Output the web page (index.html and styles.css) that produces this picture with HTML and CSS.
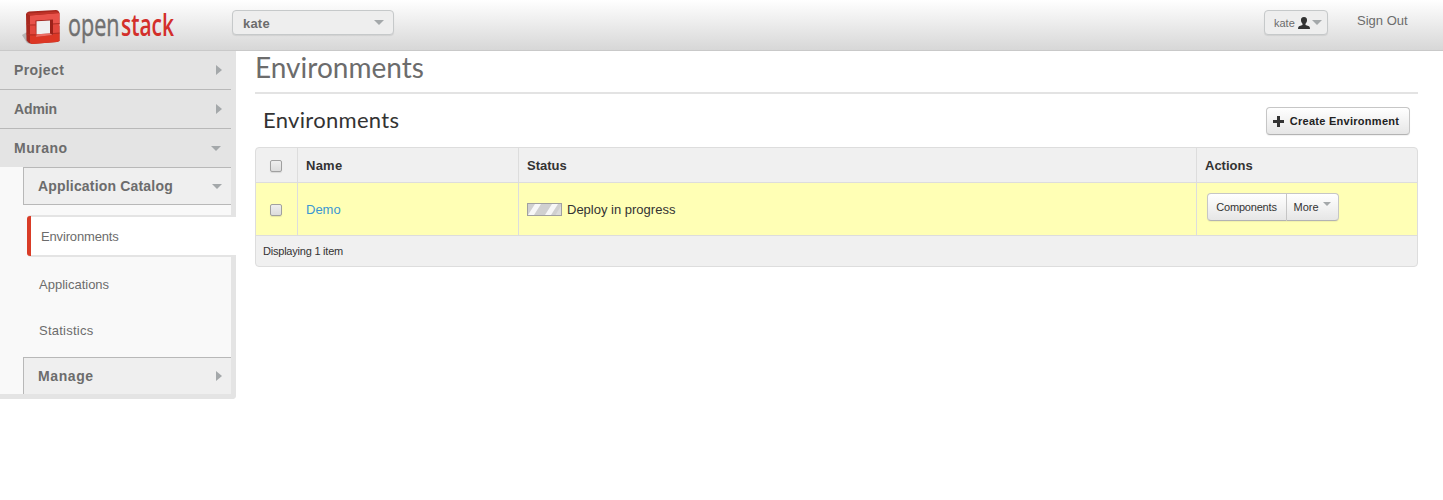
FILE: index.html
```html
<!DOCTYPE html>
<html lang="en">
<head>
<meta charset="utf-8">
<title>Environments - OpenStack Dashboard</title>
<link rel="stylesheet" href="styles.css">
</head>
<body>
<header class="topbar">
  <svg class="logo" width="160" height="50" viewBox="0 0 160 50">
    <path d="M-1 35l5-3 4 12-4-1z" fill="#888" opacity=".5"/>
    <path d="M3 14Q3.500 12 6 11.500L33 10Q35.500 10 36.500 13V24L35.500 25 36.500 26V41L34 42 9 44Q5 43 3.500 40.500z" fill="#a8281f"/>
    <path d="M7 15.500L36.500 13V23.500L7 25z" fill="#e8524a"/>
    <path d="M7 25L36.500 23.500V33L7 34.500z" fill="#e2473d"/>
    <path d="M7 34.500L36.500 33V41L34 42 9 44 7 42.500z" fill="#dc3725"/>
    <path d="M4 13.500L33 11.500 36 13 7 15.500z" fill="#c23329"/>
    <path d="M12.500 20.500L30 19.500V35L13 37z" fill="#9c2119"/>
    <path d="M13.500 21.300L27 20.500V33.500L13.500 34.300z" fill="#f0f0f0"/>
    <path d="M13.500 34.300L27 33.500l3 1.500-17 2z" fill="#ee6d63"/>
    <path d="M3.500 24l3.500 1h5.500M3.500 34l3.500 1h5.500M30 24l6.500-.5M30 33.500l6.500-.5" fill="none" stroke="#b02e25"/>
    <text class="logo-text" x="45" y="36" textLength="51.500" lengthAdjust="spacingAndGlyphs">open</text>
    <text class="logo-text logo-strong" x="98" y="36" textLength="53" lengthAdjust="spacingAndGlyphs">stack</text>
  </svg>
  <div class="project-switch"><span>kate</span><i class="tri down"></i></div>
  <div class="user-area">
    <div class="user-menu"><span>kate</span>
      <svg width="12" height="12" viewBox="0 0 12 12"><path d="M6 0C8.300 0 9.200 1.300 9 3.500 8.900 5 8.300 5.900 7.500 6.700V8L11 9.300Q12 9.800 12 12H0Q0 9.800 1 9.300L4.500 8V6.700C3.700 5.900 3.100 5 3 3.500 2.800 1.300 3.700 0 6 0z" fill="#333"/></svg>
      <i class="tri down"></i>
    </div>
    <a class="signout">Sign Out</a>
  </div>
</header>
<div class="page">
  <nav class="sidebar">
    <div class="dash"><span class="t-project">Project</span><i class="tri right"></i></div>
    <div class="dash"><span class="t-admin">Admin</span><i class="tri right"></i></div>
    <div class="dash open"><span class="t-murano">Murano</span><i class="tri down"></i></div>
    <div class="group"><span class="t-catalog">Application Catalog</span><i class="tri down"></i></div>
    <a class="panel active">Environments</a>
    <a class="panel">Applications</a>
    <a class="panel t-stat">Statistics</a>
    <div class="group last"><span class="t-manage">Manage</span><i class="tri right"></i></div>
  </nav>
  <main class="content">
    <h1>Environments</h1>
    <div class="table-head">
      <h2>Environments</h2>
      <a class="btn create"><svg width="11" height="11" viewBox="0 0 11 11"><path d="M4 0h3v4h4v3H7v4H4V7H0V4h4z" fill="#333"/></svg><span>Create Environment</span></a>
    </div>
    <div class="table">
      <div class="row head">
        <div class="cell check"><input type="checkbox"></div>
        <div class="cell t-name">Name</div>
        <div class="cell">Status</div>
        <div class="cell">Actions</div>
      </div>
      <div class="row pending">
        <div class="cell check"><input type="checkbox"></div>
        <div class="cell"><a class="link">Demo</a></div>
        <div class="cell status">
          <svg width="35" height="13" viewBox="0 0 35 13"><rect width="35" height="13" fill="#d0d0d0"/><path d="M1 12L8 1H14L7 12zM18 12L25 1H31L24 12z" fill="#f7f7f7"/><path d="M34 3V12H28.500z" fill="#dcdcdc"/><rect x=".5" y=".5" width="34" height="12" fill="none" stroke="#a0a0a0"/></svg>
          <span>Deploy in progress</span>
        </div>
        <div class="cell actions">
          <div class="btn-group"><a class="btn comp">Components</a><a class="btn more"><span>More</span><i class="tri down"></i></a></div>
        </div>
      </div>
      <div class="foot"><span>Displaying 1 item</span></div>
    </div>
  </main>
</div>
</body>
</html>
```
FILE: styles.css
```css
* { box-sizing: border-box; }
body { margin: 0; background: #fff; color: #333; font: 13px/18px "Liberation Sans", Arial, sans-serif; }

.topbar { display: flex; align-items: flex-start; height: 51px; border-bottom: 1px solid #c9c9c9; background: linear-gradient(#fff, #d7d7d7); }
.logo { display: block; margin-left: 23px; overflow: visible; }
.logo-text { font: 400 31px "Open Sans", sans-serif; fill: #707070; stroke: #707070; stroke-width: .5px; }
.logo-strong { font-weight: 600; fill: #d32f2a; stroke: none; }
.project-switch { display: flex; justify-content: space-between; align-items: center; width: 162px; height: 25px; margin: 10px 0 0 49px; padding: 0 9px 0 10px; border: 1px solid #c6c9ca; border-radius: 4px; background: #eee; color: #6c6c6c; font-weight: bold; letter-spacing: .2px; box-shadow: 0 1px 1px rgba(0,0,0,.08); }
.project-switch span { padding-top: 2px; }
.user-area { display: flex; margin-left: auto; padding-right: 35px; color: #6c6c6c; }
.user-menu { display: flex; align-items: center; width: 64px; height: 25px; margin-top: 10px; padding-left: 9px; border: 1px solid #c6c9ca; border-radius: 4px; background: #eee; font-size: 11px; box-shadow: 0 1px 1px rgba(0,0,0,.08); }
.user-menu span { width: 24px; }
.user-menu .tri { margin-left: 2px; }
.signout { margin: 12px 0 0 29px; width: 51px; white-space: nowrap; }

.tri { flex: none; display: block; width: 0; height: 0; }
.tri.down { border: 5px solid transparent; border-top-color: #a4a8aa; border-bottom: 0; }
.tri.right { border: 5px solid transparent; border-left: 6px solid #a4a8aa; border-right: 0; }

.page { display: flex; align-items: flex-start; }
.sidebar { width: 236px; height: 348px; border: solid #e4e4e4; border-width: 0 5px 5px 0; border-bottom-right-radius: 4px; background: #f9f9f9; color: #6c6c6c; }
.dash, .group { display: flex; align-items: center; justify-content: space-between; font-size: 14px; font-weight: bold; }
.dash { height: 39px; padding: 0 9px 0 14px; border-bottom: 1px solid #b8b8b8; background: #e4e4e4; }
.dash.open { height: 38px; padding-right: 10px; border: 0; }
.group { height: 38px; margin-left: 23px; padding: 0 9px 0 14px; border: 1px solid #b8b8b8; border-right: 0; background: #efefef; }
.group.last { height: 37px; margin-top: 3px; border-bottom: 0; }
.panel { display: block; height: 46px; padding-left: 39px; line-height: 46px; }
.panel.active { position: relative; width: 209px; height: 42px; margin: 10px 0 5px 27px; padding-left: 14px; border: solid #e4e4e4; border-width: 2px 0; border-radius: 4px 0 0 4px; background: #fff; line-height: 39px; letter-spacing: -.15px; }
.panel.active::before { content: ""; position: absolute; left: 0; top: -1px; width: 4px; height: 40px; border-radius: 3px 0 0 3px; background: #d93c27; }

.content { width: 1163px; margin-left: 19px; }
h1, h2 { margin: 0; font-family: Lato, sans-serif; font-weight: 400; }
h1 { height: 43px; border-bottom: 2px solid #e3e3e3; color: #6c6c6c; font-size: 28px; line-height: 33px; }
.table-head { display: flex; justify-content: space-between; height: 53px; padding: 13px 8px 0; }
h2 { font-size: 22px; line-height: 26px; letter-spacing: .3px; color: #333; }
.btn { display: flex; align-items: center; justify-content: center; height: 28px; border: 1px solid #c6c6c6; border-bottom-color: #b3b3b3; border-radius: 4px; background: linear-gradient(#fff, #e6e6e6); font-size: 11px; white-space: nowrap; box-shadow: 0 1px 1px rgba(0,0,0,.06); }
.create { width: 144px; color: #222; font-weight: bold; letter-spacing: .28px; gap: 6px; padding-right: 4px; }

.table { border: 1px solid #ddd; border-radius: 4px; overflow: hidden; background: #f0f0f0; }
.row { display: grid; grid-template-columns: 42px 221px 678px 1fr; border-bottom: 1px solid #ddd; }
.cell { display: flex; align-items: center; padding: 2px 0 0 8px; border-right: 1px solid #ddd; }
.cell:last-child { border-right: 0; }
.head { height: 35px; font-weight: bold; }
.pending { height: 53px; background: #ffffb5; }
.cell.check { padding: 0 0 0 14px; }
input { appearance: none; width: 12px; height: 12px; margin: 2px 0 0; border: 1px solid #a0a0a0; border-radius: 2px; background: linear-gradient(#eee, #dcdcdc); box-shadow: 0 1px 1px rgba(0,0,0,.1); }
.link { color: #3b97d3; }
.status { gap: 5px; }
.status svg { margin-top: -1px; }
.cell.actions { padding: 0 0 5px 10px; }
.btn-group { display: flex; }
.comp { width: 80px; border-radius: 4px 0 0 4px; letter-spacing: -.2px; padding-right: 1px; }
.more { width: 52px; border-left: 0; border-radius: 0 4px 4px 0; gap: 4px; padding-right: 1px; }
.more .tri { margin-top: -5px; border-width: 4px 4px 0; }
.foot { height: 30px; padding-left: 7px; font-size: 11px; line-height: 30px; letter-spacing: -.22px; }

.t-project { letter-spacing: .4px; }
.t-admin { letter-spacing: -.1px; }
.t-murano { letter-spacing: .5px; }
.t-catalog { letter-spacing: .18px; }
.t-manage { letter-spacing: .6px; }
.t-stat { letter-spacing: .25px; }
.t-name { letter-spacing: .25px; }
```
